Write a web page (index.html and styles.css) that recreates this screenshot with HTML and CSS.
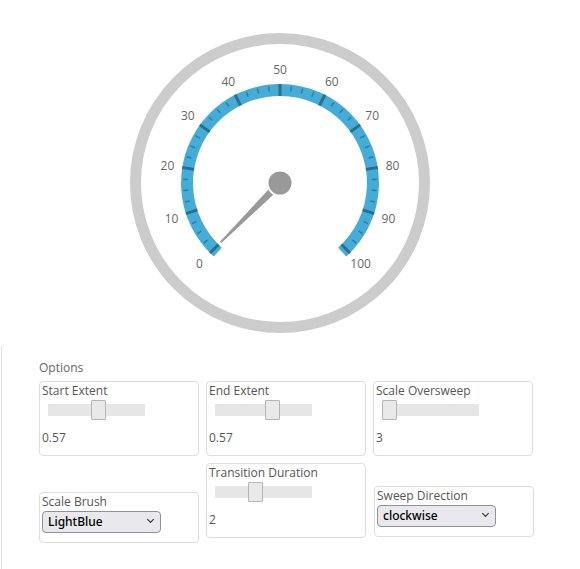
FILE: index.html
```html
<!doctype html>
<html lang="en">
<head>
    <meta charset="UTF-8">
    <title>Radial Gauge</title>
    <link rel="stylesheet" href="styles.css">
</head>
<body>
    <div class="gauge-host">
        <svg class="gauge" width="300" height="300" viewBox="0 0 300 300">
            <circle class="face" cx="150" cy="150" r="144.5"></circle>
            <path id="scale" class="scale"></path>
            <g id="ticks"></g>
            <g id="labels"></g>
            <g transform="translate(150 150) rotate(-135)">
                <polygon class="needle" points="-4,0 4,0 1,-84 -1,-84"></polygon>
            </g>
            <circle class="hub" cx="150" cy="150" r="12.5"></circle>
        </svg>
    </div>

    <div class="options">
        <div class="options-title">Options</div>
        <div class="option-list">
            <div class="option">
                <label for="startExtent">Start Extent</label>
                <input type="range" id="startExtent" min="0" max="100" value="52">
                <div class="value">0.57</div>
            </div>
            <div class="option">
                <label for="endExtent">End Extent</label>
                <input type="range" id="endExtent" min="0" max="100" value="61">
                <div class="value">0.57</div>
            </div>
            <div class="option">
                <label for="oversweep">Scale Oversweep</label>
                <input type="range" id="oversweep" min="0" max="100" value="0">
                <div class="value">3</div>
            </div>
            <div class="option">
                <label for="brush">Scale Brush</label>
                <div class="select-wrap">
                    <select id="brush">
                        <option>LightBlue</option>
                        <option>Orange</option>
                        <option>Green</option>
                    </select>
                </div>
            </div>
            <div class="option">
                <label for="duration">Transition Duration</label>
                <input type="range" id="duration" min="0" max="100" value="40">
                <div class="value">2</div>
            </div>
            <div class="option option-raised">
                <label for="direction">Sweep Direction</label>
                <div class="select-wrap">
                    <select id="direction">
                        <option>clockwise</option>
                        <option>counterclockwise</option>
                    </select>
                </div>
            </div>
        </div>
    </div>

    <script>
        var svgNS = 'http://www.w3.org/2000/svg';
        var cx = 150, cy = 150;

        function pt(deg, r) {
            var a = deg * Math.PI / 180;
            return [cx + r * Math.sin(a), cy - r * Math.cos(a)];
        }

        function angleOf(v) {
            return -135 + v * 2.7;
        }

        function add(parent, name, attrs) {
            var node = document.createElementNS(svgNS, name);
            for (var k in attrs) node.setAttribute(k, attrs[k]);
            parent.appendChild(node);
            return node;
        }

        // scale band, with 3 degrees of oversweep on each end
        var a = pt(-138, 93), b = pt(138, 93);
        document.getElementById('scale').setAttribute('d',
            'M ' + a[0] + ' ' + a[1] + ' A 93 93 0 1 1 ' + b[0] + ' ' + b[1]);

        var ticks = document.getElementById('ticks');
        for (var v = 0; v <= 100; v += 2.5) {
            var major = v % 10 === 0;
            var p1 = pt(angleOf(v), major ? 87 : 92);
            var p2 = pt(angleOf(v), major ? 99 : 97);
            add(ticks, 'line', {
                x1: p1[0], y1: p1[1], x2: p2[0], y2: p2[1],
                'class': major ? 'tick-major' : 'tick-minor'
            });
        }

        var labels = document.getElementById('labels');
        for (var v = 0; v <= 100; v += 10) {
            var p = pt(angleOf(v), 114);
            var t = add(labels, 'text', { x: p[0], y: p[1], 'class': 'gauge-label' });
            t.textContent = v;
        }
    </script>
</body>
</html>
```

FILE: styles.css
```css
body {
    margin: 0;
    font-family: "Open Sans", "Liberation Sans", sans-serif;
    font-size: 12px;
    color: #555;
    background: #fff;
}
.gauge-host {
    width: 559px;
    height: 346px;
    overflow: hidden;
}
.gauge {
    display: block;
    margin: 33px auto 0;
}
.face {
    fill: #fff;
    stroke: #ccc;
    stroke-width: 11;
}
.scale {
    fill: none;
    stroke: #45acd7;
    stroke-width: 12;
}
.tick-major {
    stroke: #2a6f8d;
    stroke-width: 3;
}
.tick-minor {
    stroke: #317d9e;
    stroke-width: 1.5;
}
.gauge-label {
    fill: #666;
    font-family: "Open Sans", "Liberation Sans", sans-serif;
    font-size: 12px;
    text-anchor: middle;
    dominant-baseline: central;
}
.needle {
    fill: #999;
}
.hub {
    fill: #999;
    stroke: #fff;
    stroke-width: 2;
}
.options {
    margin-left: 1px;
    border-left: 1px solid #e2e2e2;
    padding: 14px 0 30px 37px;
}
.options-title {
    line-height: 16px;
    color: #666;
}
.option-list {
    display: flex;
    flex-wrap: wrap;
    width: 500px;
    gap: 7px;
    margin-top: 5px;
    align-items: last baseline;
}
.option {
    width: 160px;
    box-sizing: border-box;
    border: 1px solid #ddd;
    border-radius: 4px;
    padding: 1px 2px 9px;
    line-height: 16px;
}
.option label {
    display: block;
}
.option-raised {
    align-self: flex-end;
    margin-bottom: 6px;
    margin-left: 1px;
}
input[type="range"] {
    -webkit-appearance: none;
    appearance: none;
    display: block;
    width: 97px;
    height: 20px;
    margin: 1px 0 0 6px;
    padding: 0;
    background: transparent;
}
input[type="range"]::-webkit-slider-runnable-track {
    height: 12px;
    background: #e6e6e6;
}
input[type="range"]::-webkit-slider-thumb {
    -webkit-appearance: none;
    appearance: none;
    width: 15px;
    height: 20px;
    margin-top: -4px;
    box-sizing: border-box;
    background: #e9e9e9;
    border: 1px solid #b4b4b4;
    border-radius: 1px;
}
.value {
    margin-top: 10px;
}
.select-wrap {
    position: relative;
    width: 119px;
    height: 22px;
    margin-top: 1px;
    line-height: 18px;
}
.select-wrap::after {
    content: "";
    position: absolute;
    right: 8px;
    top: 6px;
    width: 4px;
    height: 4px;
    border-right: 1.5px solid #222;
    border-bottom: 1.5px solid #222;
    transform: rotate(45deg);
    pointer-events: none;
}
select {
    -webkit-appearance: none;
    appearance: none;
    display: inline-block;
    vertical-align: top;
    width: 119px;
    height: 22px;
    margin: 0;
    padding: 0 0 1px 5px;
    border: 1px solid #8f8f9d;
    border-radius: 4px;
    background: #e9e9ed;
    color: #000;
    font-family: "Noto Sans", sans-serif;
    font-size: 12px;
    font-weight: 500;
    line-height: normal;
}
```
